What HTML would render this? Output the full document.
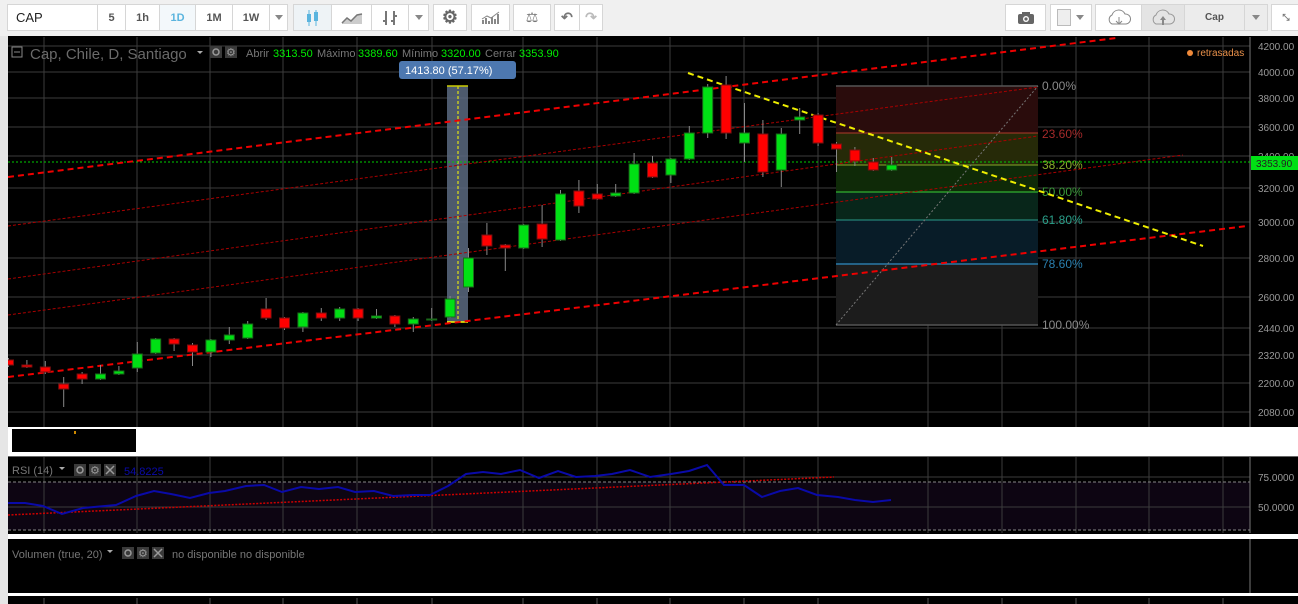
<!DOCTYPE html>
<html><head><meta charset="utf-8"><style>
*{margin:0;padding:0;box-sizing:border-box}
body{width:1298px;height:604px;background:#f0f0f0;position:relative;overflow:hidden;font-family:"Liberation Sans",sans-serif}
.tb{position:absolute;top:4px;height:27px;background:#fff;border:1px solid #d6d6d6;font-size:11px;font-weight:bold;color:#555;display:flex;align-items:center;justify-content:center}
.dd:after{content:"";border-left:4px solid transparent;border-right:4px solid transparent;border-top:5px solid #888}
svg text{font-family:"Liberation Sans",sans-serif}
</style></head><body>
<!-- toolbar -->
<div class="tb" style="left:7px;width:91px;justify-content:flex-start;padding-left:8px;font-weight:normal;font-size:13px;color:#222">CAP</div>
<div class="tb" style="left:97px;width:29px">5</div>
<div class="tb" style="left:125px;width:35px">1h</div>
<div class="tb" style="left:159px;width:37px;color:#5ab4de;background:#f3f8fb">1D</div>
<div class="tb" style="left:195px;width:38px">1M</div>
<div class="tb" style="left:232px;width:38px">1W</div>
<div class="tb dd" style="left:269px;width:19px"></div>
<div class="tb" style="left:293px;width:39px;background:#eef3f6"><svg width="20" height="20"><line x1="6" y1="2" x2="6" y2="18" stroke="#5ab4de"/><rect x="4" y="6" width="4" height="8" fill="#5ab4de"/><line x1="13" y1="2" x2="13" y2="18" stroke="#5ab4de"/><rect x="11" y="4" width="4" height="9" fill="#5ab4de"/></svg></div>
<div class="tb" style="left:331px;width:41px"><svg width="22" height="14"><path d="M1 12 L6 7 L10 10 L16 4 L21 3 L21 13 L1 13Z" fill="#ccc"/><path d="M1 12 L6 7 L10 10 L16 4 L21 3" fill="none" stroke="#777" stroke-width="1.5"/></svg></div>
<div class="tb" style="left:371px;width:38px"><svg width="18" height="20"><path d="M5 3V17M2 13H5M13 3V17M13 8H16M13 13H10" stroke="#777" stroke-width="2" fill="none"/></svg></div>
<div class="tb dd" style="left:408px;width:21px"></div>
<div class="tb" style="left:433px;width:34px;font-size:18px;color:#666">⚙</div>
<div class="tb" style="left:471px;width:39px"><svg width="20" height="14"><path d="M2 13V9M5 13V7M8 13V10M11 13V6M14 13V8M17 13V3" stroke="#888" stroke-width="2"/><path d="M1 8L6 5L10 7L18 1" stroke="#888" fill="none"/></svg></div>
<div class="tb" style="left:513px;width:38px;font-size:14px;color:#777;font-weight:normal">⚖</div>
<div class="tb" style="left:554px;width:26px;font-size:14px;color:#777">↶</div>
<div class="tb" style="left:579px;width:24px;font-size:14px;color:#bbb">↷</div>
<div class="tb" style="left:1005px;width:41px"><svg width="18" height="14"><rect x="1" y="3" width="16" height="10" rx="2" fill="#666"/><rect x="5" y="1" width="8" height="3" fill="#666"/><circle cx="9" cy="8" r="3" fill="#fff"/><circle cx="9" cy="8" r="1.6" fill="#666"/></svg></div>
<div class="tb" style="left:1050px;width:42px;justify-content:flex-start;padding-left:6px"><div style="width:14px;height:17px;border:1px solid #bbb;background:#eee"></div><div style="margin-left:5px;border-left:4px solid transparent;border-right:4px solid transparent;border-top:5px solid #888"></div></div>
<div class="tb" style="left:1095px;width:47px"><svg width="26" height="18"><path d="M6 15 A5 5 0 0 1 6 6 A7 7 0 0 1 19 5 A5 5 0 0 1 20 15Z" fill="none" stroke="#888"/><path d="M13 8V15M10 12L13 15L16 12" stroke="#888" fill="none"/></svg></div>
<div class="tb" style="left:1141px;width:44px;background:#e4e4e4"><svg width="26" height="18"><path d="M6 15 A5 5 0 0 1 6 6 A7 7 0 0 1 19 5 A5 5 0 0 1 20 15Z" fill="none" stroke="#999"/><path d="M10 11L13 7L16 11H14V16H12V11Z" fill="#888"/></svg></div>
<div class="tb" style="left:1184px;width:61px;background:#ececec;font-size:10px">Cap</div>
<div class="tb dd" style="left:1244px;width:24px;background:#ececec"></div>
<div class="tb" style="left:1271px;width:30px;font-size:9px;color:#777">⤡</div>

<svg style="position:absolute;left:0;top:0" width="1298" height="604">
<defs><clipPath id="cp"><rect x="8" y="37" width="1242" height="390"/></clipPath>
<clipPath id="cr"><rect x="8" y="457" width="1242" height="76"/></clipPath></defs>
<rect x="0" y="36" width="8" height="568" fill="#e6e6e6"/>
<rect x="8" y="36" width="1290" height="391" fill="#000"/>
<g stroke="#3c3c3c" stroke-width="1">
<path d="M44 37V427M137 37V427M210 37V427M283 37V427M357 37V427M432 37V427M523 37V427M597 37V427M670 37V427M744 37V427M818 37V427M928 37V427M1002 37V427M1076 37V427M1149 37V427M1223 37V427"/>
<path d="M8 46H1250M8 72H1250M8 98H1250M8 127H1250M8 156H1250M8 188H1250M8 222H1250M8 258H1250M8 297H1250M8 328H1250M8 355H1250M8 383H1250M8 412H1250"/>
</g>
<line x1="1250" y1="37" x2="1250" y2="427" stroke="#777"/>
<g fill="#999" font-size="10">
<text x="1258" y="50">4200.00</text><text x="1258" y="76">4000.00</text><text x="1258" y="102">3800.00</text><text x="1258" y="131">3600.00</text><text x="1258" y="160">3400.00</text><text x="1258" y="192">3200.00</text><text x="1258" y="226">3000.00</text><text x="1258" y="262">2800.00</text><text x="1258" y="301">2600.00</text><text x="1258" y="332">2440.00</text><text x="1258" y="359">2320.00</text><text x="1258" y="387">2200.00</text><text x="1258" y="416">2080.00</text>
</g>
<g clip-path="url(#cp)">
<!-- fib -->
<rect x="836" y="86" width="202" height="47" fill="#2a0c0c"/>
<rect x="836" y="133" width="202" height="32" fill="#262a08"/>
<rect x="836" y="165" width="202" height="27" fill="#0f2a08"/>
<rect x="836" y="192" width="202" height="28" fill="#08261a"/>
<rect x="836" y="220" width="202" height="44" fill="#081c28"/>
<rect x="836" y="264" width="202" height="61" fill="#1c1c1c"/>
<line x1="836" y1="86" x2="1038" y2="86" stroke="#555" stroke-width="1.5"/>
<line x1="836" y1="133" x2="1038" y2="133" stroke="#b03a2a"/>
<line x1="836" y1="165" x2="1038" y2="165" stroke="#8aa82a"/>
<line x1="836" y1="192" x2="1038" y2="192" stroke="#2a9a2a" stroke-width="1.5"/>
<line x1="836" y1="220" x2="1038" y2="220" stroke="#2a9a8a"/>
<line x1="836" y1="264" x2="1038" y2="264" stroke="#2a7aa8" stroke-width="1.5"/>
<line x1="836" y1="325" x2="1038" y2="325" stroke="#555" stroke-width="1.5"/>
<line x1="836" y1="325" x2="1038" y2="86" stroke="#777" stroke-dasharray="2,2"/>
<g font-size="12">
<text x="1042" y="90" fill="#8a8a8a">0.00%</text>
<text x="1042" y="138" fill="#a52a2a">23.60%</text>
<text x="1042" y="169" fill="#8aac2a">38.20%</text>
<text x="1042" y="196" fill="#3a9a3a">50.00%</text>
<text x="1042" y="224" fill="#2aa08a">61.80%</text>
<text x="1042" y="268" fill="#2a80b0">78.60%</text>
<text x="1042" y="329" fill="#8a8a8a">100.00%</text>
</g>
<!-- measure -->
<rect x="447" y="86" width="21" height="236" fill="#5a6a80" opacity="0.85"/>
<line x1="458" y1="86" x2="458" y2="322" stroke="#ff0" stroke-dasharray="3,2"/>
<line x1="447" y1="86" x2="468" y2="86" stroke="#cc0" stroke-width="1.5"/>
<line x1="447" y1="322" x2="468" y2="322" stroke="#ff0" stroke-width="1.5"/>
<!-- green price line -->
<line x1="8" y1="162" x2="1250" y2="162" stroke="#0c0" stroke-dasharray="2,2"/>
<!-- thin trend lines -->
<g stroke="#a00" stroke-dasharray="3,2" stroke-width="1">
<line x1="8" y1="226" x2="1038" y2="87"/>
<line x1="8" y1="279" x2="1038" y2="136"/>
<line x1="8" y1="315" x2="1183" y2="155"/>
</g>
<g stroke="#e00" stroke-dasharray="6,4" stroke-width="2">
<line x1="8" y1="177" x2="1116" y2="38"/>
<line x1="8" y1="377" x2="1247" y2="226"/>
</g>
<line x1="688" y1="73" x2="1203" y2="246" stroke="#ee0" stroke-width="2" stroke-dasharray="6,4"/>
<!-- candles wicks -->
<g stroke="#888" stroke-width="1">
<path d="M8.5 358V367M26.9 360V368M45.3 361V374M63.7 377V407M82.1 372V384M100.5 365V380M118.9 366V375M137.3 342V372M155.7 338V354M174.1 338V351M192.5 343V366M210.9 339V357M229.3 327V344M247.7 321V339M266.1 298V320M284.5 317V330M302.9 312V332M321.3 308V321M339.7 307V321M358.1 308V321M376.5 309V319M394.9 315V327M413.3 317V332M431.7 308V321M450.1 296V318M468.5 248V292M486.9 223V255M505.3 244V271M523.7 224V249M542.1 205V247M560.5 190V241M578.9 180V213M597.3 184V200M615.7 184V197M634.1 153V194M652.5 156V178M670.9 158V183M689.3 126V160M707.7 84V138M726.1 76V139M744.5 103V162M762.9 120V177M781.3 128V187M799.7 108V134M818.1 113V146M836.5 142V172M854.9 147V166M873.3 158V171M891.7 157V171"/>
</g>
<g fill="#f00" stroke="#7a1010" stroke-width="1">
<rect x="3.5" y="360" width="10" height="5"/><rect x="21.9" y="365" width="10" height="2"/><rect x="40.3" y="367" width="10" height="5"/><rect x="58.7" y="384" width="10" height="5"/><rect x="77.1" y="374" width="10" height="5"/>
<rect x="169.1" y="339" width="10" height="5"/><rect x="187.5" y="345" width="10" height="7"/><rect x="261.1" y="309" width="10" height="9"/><rect x="279.5" y="318" width="10" height="10"/><rect x="316.3" y="313" width="10" height="5"/><rect x="353.1" y="309" width="10" height="9"/><rect x="389.9" y="316" width="10" height="8"/>
<rect x="481.9" y="235" width="10" height="11"/><rect x="500.3" y="245" width="10" height="3"/><rect x="537.1" y="224" width="10" height="15"/><rect x="573.9" y="191" width="10" height="15"/><rect x="592.3" y="194" width="10" height="5"/><rect x="647.5" y="163" width="10" height="14"/><rect x="721.1" y="85" width="10" height="48"/><rect x="757.9" y="134" width="10" height="38"/><rect x="813.1" y="115" width="10" height="28"/><rect x="831.5" y="144" width="10" height="5"/><rect x="849.9" y="150" width="10" height="11"/><rect x="868.3" y="162" width="10" height="8"/>
</g>
<g fill="#00e014" stroke="#1a6a1a" stroke-width="1">
<rect x="95.5" y="374" width="10" height="5"/><rect x="113.9" y="371" width="10" height="3"/><rect x="132.3" y="354" width="10" height="14"/><rect x="150.7" y="339" width="10" height="14"/><rect x="205.9" y="340" width="10" height="12"/><rect x="224.3" y="335" width="10" height="5"/><rect x="242.7" y="324" width="10" height="14"/><rect x="297.9" y="313" width="10" height="14"/><rect x="334.7" y="309" width="10" height="9"/><rect x="371.5" y="316" width="10" height="2"/><rect x="408.3" y="319" width="10" height="5"/><rect x="426.7" y="319" width="10" height="1"/><rect x="445.1" y="299" width="10" height="18"/>
<rect x="463.5" y="258" width="10" height="29"/><rect x="518.7" y="225" width="10" height="23"/><rect x="555.5" y="194" width="10" height="46"/><rect x="610.7" y="193" width="10" height="3"/><rect x="629.1" y="164" width="10" height="29"/><rect x="665.9" y="159" width="10" height="16"/><rect x="684.3" y="133" width="10" height="26"/><rect x="702.7" y="87" width="10" height="46"/><rect x="739.5" y="133" width="10" height="10"/><rect x="776.3" y="134" width="10" height="36"/><rect x="794.7" y="117" width="10" height="3"/><rect x="886.7" y="165" width="10" height="5"/>
</g>
</g>
<!-- price tag -->
<rect x="1251" y="156" width="47" height="14" fill="#00e014"/>
<text x="1256" y="167" font-size="10" fill="#222">3353.90</text>
<!-- measure label -->
<rect x="399" y="61" width="117" height="18" rx="3" fill="#4d78b0"/>
<text x="405" y="74" font-size="11" fill="#fff">1413.80 (57.17%)</text>
<!-- header -->
<rect x="12" y="47" width="10" height="10" fill="none" stroke="#888"/><line x1="14" y1="52" x2="20" y2="52" stroke="#888"/>
<text x="30" y="59" font-size="15" fill="#6a6a6a">Cap, Chile, D, Santiago</text>
<path d="M197 51h6l-3 3z" fill="#aaa"/>
<rect x="210" y="46" width="12" height="12" fill="#3a3a3a"/><circle cx="216" cy="52" r="3" fill="none" stroke="#999" stroke-width="1.5"/>
<rect x="225" y="46" width="12" height="12" fill="#3a3a3a"/><text x="226" y="56" font-size="11" fill="#999">⚙</text>
<g font-size="11"><text x="246" y="57" fill="#777">Abrir</text><text x="273" y="57" fill="#0e0">3313.50</text><text x="317" y="57" fill="#777">Máximo</text><text x="358" y="57" fill="#0e0">3389.60</text><text x="402" y="57" fill="#777">Mínimo</text><text x="441" y="57" fill="#0e0">3320.00</text><text x="485" y="57" fill="#777">Cerrar</text><text x="519" y="57" fill="#0e0">3353.90</text></g>
<circle cx="1190" cy="53" r="3" fill="#f08a3a"/><text x="1197" y="56" font-size="10" fill="#e8904a">retrasadas</text>
<!-- white band -->
<rect x="8" y="427" width="1290" height="29" fill="#fff"/>
<rect x="12" y="429" width="124" height="23" fill="#000"/>
<rect x="74" y="431" width="2" height="3" fill="#c80"/>
<!-- RSI -->
<rect x="8" y="456" width="1290" height="78" fill="#000"/>
<line x1="8" y1="456.5" x2="1298" y2="456.5" stroke="#666"/>
<rect x="8" y="482" width="1242" height="48" fill="#0d0512"/>
<g stroke="#3c3c3c"><path d="M44 457V533M137 457V533M210 457V533M283 457V533M357 457V533M432 457V533M523 457V533M597 457V533M670 457V533M744 457V533M818 457V533M928 457V533M1002 457V533M1076 457V533M1149 457V533M1223 457V533M8 477H1250M8 507H1250"/></g>
<line x1="8" y1="482" x2="1250" y2="482" stroke="#888" stroke-dasharray="3,2"/>
<line x1="8" y1="530" x2="1250" y2="530" stroke="#888" stroke-dasharray="3,2"/>
<line x1="1250" y1="457" x2="1250" y2="533" stroke="#777"/>
<text x="1258" y="481" font-size="10" fill="#999">75.0000</text><text x="1258" y="511" font-size="10" fill="#999">50.0000</text>
<g clip-path="url(#cr)">
<line x1="8" y1="515" x2="834" y2="477" stroke="#c00" stroke-dasharray="2,1.5" stroke-width="1.5"/>
<polyline fill="none" stroke="#0a0aa8" stroke-width="2" points="8,503 25,503 43,506 62,514 83,508 116,505 136,496 154,491 171,494 190,498 209,493 225,491 246,486 264,485 282,492 301,487 319,489 338,487 355,492 374,491 393,496 413,495 430,495 448,486 466,474 483,472 501,474 520,470 539,478 558,471 576,477 595,476 612,474 630,470 650,477 671,474 689,471 707,465 724,485 744,485 762,497 780,491 798,488 817,495 838,497 855,500 873,502 891,500"/>
</g>
<text x="12" y="474" font-size="11" fill="#777">RSI (14)</text><path d="M59 467h6l-3 3z" fill="#aaa"/>
<rect x="74" y="464" width="12" height="12" fill="#3a3a3a"/><circle cx="80" cy="470" r="3" fill="none" stroke="#999" stroke-width="1.5"/>
<rect x="89" y="464" width="12" height="12" fill="#3a3a3a"/><text x="90" y="474" font-size="11" fill="#999">⚙</text>
<rect x="104" y="464" width="12" height="12" fill="#3a3a3a"/><path d="M106 466l8 8M114 466l-8 8" stroke="#999" stroke-width="1.5"/>
<text x="124" y="475" font-size="11" fill="#0a0aa8">54.8225</text>
<!-- volume -->
<rect x="8" y="534" width="1290" height="5" fill="#fff"/>
<rect x="8" y="539" width="1290" height="54" fill="#000"/>
<line x1="1250" y1="539" x2="1250" y2="596" stroke="#777"/>
<text x="12" y="558" font-size="11" fill="#777">Volumen (true, 20)</text><path d="M107 550h6l-3 3z" fill="#aaa"/>
<rect x="122" y="547" width="12" height="12" fill="#3a3a3a"/><circle cx="128" cy="553" r="3" fill="none" stroke="#999" stroke-width="1.5"/>
<rect x="137" y="547" width="12" height="12" fill="#3a3a3a"/><text x="138" y="557" font-size="11" fill="#999">⚙</text>
<rect x="152" y="547" width="12" height="12" fill="#3a3a3a"/><path d="M154 549l8 8M162 549l-8 8" stroke="#999" stroke-width="1.5"/>
<text x="172" y="558" font-size="11" fill="#777">no disponible  no disponible</text>
<rect x="8" y="593" width="1290" height="3" fill="#fff"/>
<rect x="8" y="596" width="1290" height="8" fill="#000"/>
<g stroke="#555"><path d="M44 598V604M137 598V604M210 598V604M283 598V604M357 598V604M432 598V604M523 598V604M597 598V604M670 598V604M744 598V604M818 598V604M928 598V604M1002 598V604M1076 598V604M1149 598V604M1223 598V604"/></g>
</svg>
</body></html>
